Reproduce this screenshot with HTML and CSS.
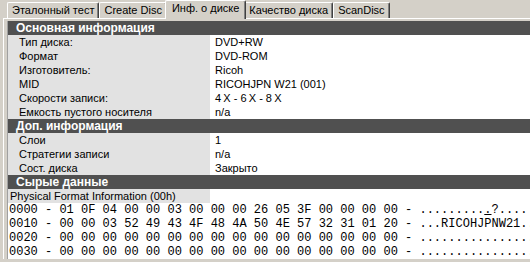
FILE: index.html
```html
<!DOCTYPE HTML>
<html>
    <head>
        <meta http-equiv="Content-Type" content="text/html;charset=UTF-8">
        <title>Инф. о диске</title>
        <link rel="stylesheet" href="styles.css">
    </head>
<body>
<div class="tabs">
    <div class="tab">Эталонный тест</div>
    <div class="tab">Create Disc</div>
    <div class="tab active">Инф. о диске</div>
    <div class="tab">Качество диска</div>
    <div class="tab">ScanDisc</div>
</div>
<div class="panel">
<div class="list">
    <div class="sec">Основная информация</div>
    <div class="row"><div class="k">Тип диска:</div><div class="v">DVD+RW</div></div>
    <div class="row"><div class="k">Формат</div><div class="v">DVD-ROM</div></div>
    <div class="row"><div class="k">Изготовитель:</div><div class="v">Ricoh</div></div>
    <div class="row"><div class="k">MID</div><div class="v">RICOHJPN W21 (001)</div></div>
    <div class="row"><div class="k">Скорости записи:</div><div class="v">4&#x2009;X - 6&#x2009;X - 8&#x2009;X</div></div>
    <div class="row"><div class="k">Емкость пустого носителя</div><div class="v">n/a</div></div>
    <div class="sec">Доп. информация</div>
    <div class="row"><div class="k">Слои</div><div class="v">1</div></div>
    <div class="row"><div class="k">Стратегии записи</div><div class="v">n/a</div></div>
    <div class="row"><div class="k">Сост. диска</div><div class="v">Закрыто</div></div>
    <div class="sec">Сырые данные</div>
    <div class="raw">
        <div class="cap">Physical Format Information (00h)</div>
        <div class="hex">0000 - 01 0F 04 00 00 03 00 00 00 26 05 3F 00 00 00 00 - .........<u>.</u>?....</div>
        <div class="hex">0010 - 00 00 03 52 49 43 4F 48 4A 50 4E 57 32 31 01 20 - ...RICOHJPNW21..</div>
        <div class="hex">0020 - 00 00 00 00 00 00 00 00 00 00 00 00 00 00 00 00 - ................</div>
        <div class="hex">0030 - 00 00 00 00 00 00 00 00 00 00 00 00 00 00 00 00 - ................</div>
    </div>
</div>
</div>
</body>
</html>
```

FILE: styles.css
```css
body {
    margin: 0;
    height: 262px;
    overflow: hidden;
    background: #d4d0c8;
    font: 11px "Liberation Sans", Arial, sans-serif;
    color: #000;
}
.tabs {
    display: flex;
    align-items: flex-end;
    height: 18px;
    padding-left: 7px;
    position: relative;
    z-index: 1;
}
.tab {
    box-sizing: border-box;
    height: 16px;
    padding: 1px 4px 0 4px;
    line-height: 13px;
    white-space: nowrap;
    border-top: 1px solid #fff;
    border-left: 1px solid #fff;
    border-right: 1px solid #404040;
    box-shadow: inset -1px 0 #808080;
    border-radius: 2px 2px 0 0;
    background: #d4d0c8;
}
.tab.active {
    height: 19px;
    margin: 0 -2px -1px -2px;
    padding: 1px 6px 0 6px;
    position: relative;
    z-index: 2;
}
.panel {
    margin-left: 3px;
    border-top: 1px solid #fff;
    border-left: 1px solid #fff;
    padding: 2px 0 0 3px;
}
.list {
    border-left: 1px solid #a0a0a0;
}
.sec {
    height: 14px;
    line-height: 14px;
    padding-left: 8px;
    background: #505050;
    color: #fff;
    font-weight: bold;
    font-size: 12px;
}
.row {
    display: grid;
    grid-template-columns: 202px 1fr;
    height: 14px;
    line-height: 14px;
}
.row .k {
    background: #e2e2e2;
    padding-left: 11px;
    white-space: nowrap;
}
.row .v {
    background: #fff;
    padding-left: 5px;
    white-space: nowrap;
}
.raw {
    background: #fff;
}
.raw .cap {
    width: 200px;
    height: 14px;
    line-height: 14px;
    padding-left: 2px;
    background: #e2e2e2;
    white-space: nowrap;
}
.hex {
    height: 14px;
    line-height: 14px;
    padding-left: 1px;
    font: 12px "Liberation Mono", "Courier New", monospace;
    white-space: pre;
}
```
